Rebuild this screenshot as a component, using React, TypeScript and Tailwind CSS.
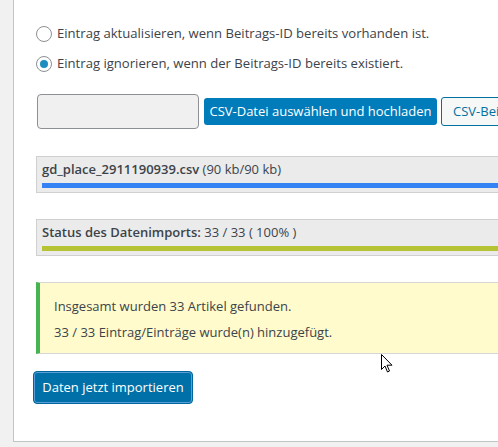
export default function App() {
  return (
    <div className="relative h-[447px] w-[498px] overflow-hidden bg-[#f1f1f1] pl-[13px] font-['Open_Sans','Liberation_Sans',sans-serif] text-[13px] text-[#3c434a]">
      <div className="h-[442px] w-[700px] border-b border-l border-[#c3c4c7] bg-white pl-[22px] pt-[26px]">
        <div className="flex flex-col gap-[14px]">
          <label className="flex h-[16px] items-center gap-[5px]">
            <span className="h-[16px] w-[16px] shrink-0 rounded-full border border-[#8c8f94] bg-white" />
            <span className="text-[13.1px]">Eintrag aktualisieren, wenn Beitrags-ID bereits vorhanden ist.</span>
          </label>
          <label className="flex h-[16px] items-center gap-[5px]">
            <span className="flex h-[16px] w-[16px] shrink-0 items-center justify-center rounded-full border border-[#8c8f94] bg-white">
              <span className="h-[8px] w-[8px] rounded-full bg-[#1e8cbe]" />
            </span>
            <span className="text-[13.1px]">Eintrag ignorieren, wenn der Beitrags-ID bereits existiert.</span>
          </label>
        </div>

        <div className="mt-[22px] flex items-center">
          <div className="ml-[1px] h-[35px] w-[162px] shrink-0 rounded-[4px] border border-[#8c8f94] bg-[#f0f0f0]" />
          <button className="ml-[5px] h-[27px] w-[233px] shrink-0 whitespace-nowrap rounded-[3px] bg-[#007cba] text-white">
            CSV-Datei auswählen und hochladen
          </button>
          <button className="ml-[4px] h-[29px] shrink-0 whitespace-nowrap rounded-[3px] border border-[#0071a1] bg-[#f6f7f7] px-[11px] text-[#0071a1]">
            CSV-Beispieldatei herunterladen
          </button>
        </div>

        <div className="mt-[27px] border border-[#d0d0d0] bg-[#ebebeb] px-[5px] pb-[4px] pt-[2px]">
          <div className="leading-[20px]">
            <span className="font-semibold">gd_place_2911190939.csv</span> (90 kb/90 kb)
          </div>
          <div className="mt-[4px] h-[5px] bg-[#3582f5]" />
        </div>

        <div className="mt-[26px] border border-[#d0d0d0] bg-[#ebebeb] px-[5px] pb-[4px] pt-[2px]">
          <div className="leading-[20px]">
            <span className="font-semibold">Status des Datenimports:</span> 33 / 33 ( 100% )
          </div>
          <div className="mt-[4px] h-[5px] bg-[#b5c334]" />
        </div>

        <div className="mt-[26px] flex flex-col gap-[6px] border-y border-r border-l-4 border-[#d6d6d6] border-l-[#46b450] bg-[#fffbcc] pb-[11px] pl-[14px] pt-[13px]">
          <p className="leading-[20px]">Insgesamt wurden 33 Artikel gefunden.</p>
          <p className="leading-[20px]">33 / 33 Eintrag/Einträge wurde(n) hinzugefügt.</p>
        </div>

        <button className="-ml-[3px] mt-[17px] h-[33px] w-[160px] rounded-[4px] border border-[#00669b] bg-[#0071a8] text-white shadow-[inset_0_0_0_1px_#5b9dd9]">
          Daten jetzt importieren
        </button>
      </div>

      <svg className="absolute left-[381px] top-[354px]" width="12" height="19" viewBox="0 0 12 19">
        <path d="M0.5 0.5 L0.5 15.5 L4 12 L6.5 18 L8.5 17 L6 11.2 L11 11.2 Z" fill="white" stroke="black" strokeWidth="1" />
      </svg>
    </div>
  );
}
